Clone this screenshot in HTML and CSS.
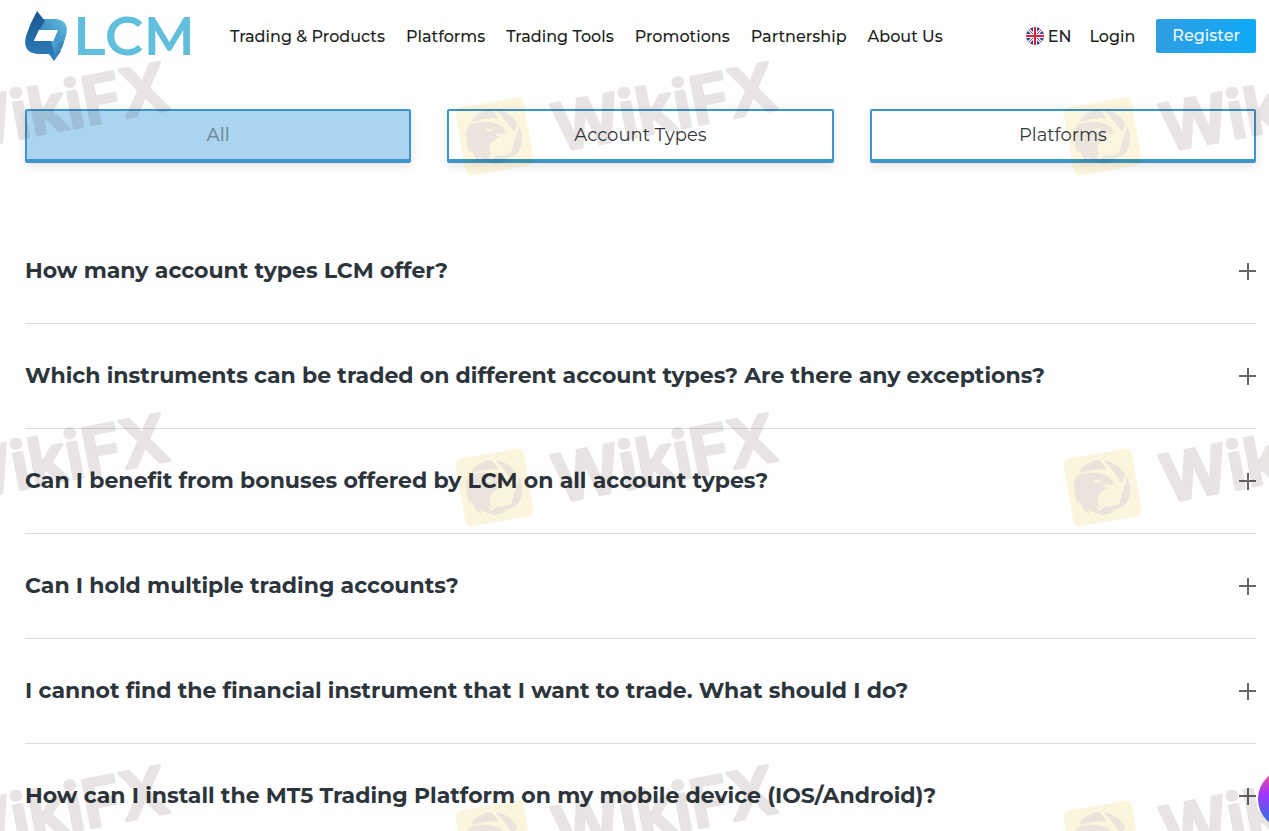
FILE: index.html
```html
<!DOCTYPE html>
<html lang="en">
<head>
<meta charset="utf-8">
<meta name="viewport" content="width=device-width, initial-scale=1">
<title>LCM FAQ</title>
<link rel="stylesheet" href="styles.css">
</head>
<body>
<header class="header">
  <a class="logo" href="#" aria-label="LCM home">
    <svg width="176" height="52" viewBox="0 0 176 52">
      <defs>
        <linearGradient id="mark-light" x1="0" y1="1" x2="1" y2="0"><stop offset="0" stop-color="#1d66a8"/><stop offset="1" stop-color="#62bfe0"/></linearGradient>
        <linearGradient id="mark-dark" x1="0" y1="0" x2="0" y2="1"><stop offset="0" stop-color="#1b5590"/><stop offset="1" stop-color="#2d7fbc"/></linearGradient>
        <linearGradient id="mark-tail" x1="0" y1="0" x2="1" y2="1"><stop offset="0" stop-color="#56b1da"/><stop offset="1" stop-color="#1c5d9e"/></linearGradient>
      </defs>
      <path d="M12 9H31Q45 11 41 26L37 38Q34 42 29 44L24 32H28L33 20H12Z" fill="url(#mark-light)"/>
      <path d="M12 1L20 11L14 20L9 31H28L36 41L29 51L24 44H12Q-3 42 1 26L6 13Z" fill="url(#mark-dark)"/>
      <path d="M26 31L39 32L36 39L29 51V42Z" fill="url(#mark-tail)"/>
      <path d="M14 20H32L27 31H9Z" fill="#fff"/>
      <text class="logo-text" x="48" y="45">LCM</text>
    </svg>
  </a>
  <nav class="nav" aria-label="Main">
    <a href="#">Trading &amp; Products</a>
    <a href="#">Platforms</a>
    <a href="#">Trading Tools</a>
    <a href="#">Promotions</a>
    <a href="#">Partnership</a>
    <a href="#">About Us</a>
  </nav>
  <div class="account">
    <button class="language" type="button">
      <svg width="18" height="18" viewBox="0 0 18 18" aria-hidden="true">
        <clipPath id="flag-clip"><circle cx="9" cy="9" r="9"/></clipPath>
        <g clip-path="url(#flag-clip)">
          <path d="M0 0H18V18H0Z" fill="#35448f"/>
          <path d="M1 1L17 17M17 1L1 17" stroke="#fff" stroke-width="3"/>
          <path d="M1 1L17 17M17 1L1 17" stroke="#d9324a" stroke-width="1"/>
          <path d="M9 0V18M0 9H18" stroke="#fff" stroke-width="4"/>
          <path d="M9 0V18M0 9H18" stroke="#d9203c" stroke-width="2"/>
        </g>
      </svg>
      EN
    </button>
    <a class="login" href="#">Login</a>
    <a class="register" href="#">Register</a>
  </div>
</header>
<main class="main">
  <div class="tabs">
    <button class="tab tab-active" type="button">All</button>
    <button class="tab" type="button">Account Types</button>
    <button class="tab" type="button">Platforms</button>
  </div>
  <section class="faq" aria-label="Frequently asked questions">
    <details class="item"><summary>How many account types LCM offer?<span class="plus"></span></summary></details>
    <details class="item"><summary>Which instruments can be traded on different account types? Are there any exceptions?<span class="plus"></span></summary></details>
    <details class="item"><summary>Can I benefit from bonuses offered by LCM on all account types?<span class="plus"></span></summary></details>
    <details class="item"><summary>Can I hold multiple trading accounts?<span class="plus"></span></summary></details>
    <details class="item"><summary>I cannot find the financial instrument that I want to trade. What should I do?<span class="plus"></span></summary></details>
    <details class="item"><summary>How can I install the MT5 Trading Platform on my mobile device (IOS/Android)?<span class="plus"></span></summary></details>
  </section>
</main>
<svg class="watermark" aria-hidden="true">
  <defs>
    <g id="stamp">
      <rect x="460" y="102" width="69" height="69" rx="6" transform="rotate(-10 494 136)" fill="#fdf6df"/>
      <g transform="translate(432 49) scale(.3333)" fill="#ece5de">
        <path d="M124 207Q145 184 178 180L202 208Q160 207 117 220Z"/>
        <path d="M190 180Q235 188 256 224L247 250L207 198Z"/>
        <path d="M262 232Q279 270 262 306Q253 321 234 324L238 308Z"/>
        <path d="M252 306Q224 340 190 345Q176 344 174 336L194 320Q222 320 252 306Z"/>
        <path d="M112 225Q155 211 187 222Q216 230 222 252L214 255Q197 249 189 258Q196 264 207 264Q184 273 176 286Q167 304 180 322L170 318L178 342Q153 337 142 321L149 342Q125 330 120 304L113 312Q100 285 106 262L100 268Q101 243 112 225Z"/>
        <path d="M162 239L184 239Q179 249 166 247Z" fill="#fdf6df"/>
      </g>
      <text class="stamp-text" transform="translate(558 152) rotate(-11)">WikiFX</text>
    </g>
  </defs>
  <use href="#stamp" x="-608"/><use href="#stamp"/><use href="#stamp" x="608"/>
  <use href="#stamp" x="-608" y="351"/><use href="#stamp" y="351"/><use href="#stamp" x="608" y="351"/>
  <use href="#stamp" x="-608" y="703"/><use href="#stamp" y="703"/><use href="#stamp" x="608" y="703"/>
</svg>
<button class="chat" type="button" aria-label="Open chat"></button>
</body>
</html>
```
FILE: styles.css
```css
* { box-sizing: border-box; }
body {
  margin: 0;
  background: #fefefe;
  color: #1c1e20;
  font-family: Montserrat, Inter, "Open Sans", sans-serif;
  font-size: 16px;
}
a { color: inherit; text-decoration: none; }
button { font: inherit; color: inherit; cursor: pointer; }
.header {
  display: flex;
  align-items: center;
  padding: 10px 13px 10px 25px;
}
.logo { display: block; height: 52px; margin-right: 29px; }
.logo svg { overflow: visible; }
.logo-text {
  font-size: 54px;
  font-weight: 600;
  fill: #60bfdc;
}
.nav { display: flex; gap: 21px; font-weight: 500; white-space: nowrap; }
.account { display: flex; align-items: center; margin-left: auto; font-weight: 500; }
.language {
  display: flex;
  align-items: center;
  gap: 4px;
  padding: 0;
  border: 0;
  background: none;
}
.login { margin: 0 21px 0 18px; }
.register {
  padding: 0 16px;
  border-radius: 2px;
  background: linear-gradient(90deg, #2f9de2, #10aaf8);
  color: #eef8ff;
  line-height: 34px;
}
.main { padding: 37px 13px 0 25px; }
.tabs { display: grid; grid-template-columns: repeat(3, 1fr); gap: 36px; }
.tab {
  height: 54px;
  padding: 0;
  border: 2px solid #3f95c9;
  border-bottom-width: 4px;
  border-radius: 2px;
  background: #fff;
  box-shadow: 0 3px 10px rgba(0, 0, 0, .1);
  color: #34383b;
  font-size: 18px;
}
.tab-active { background: #abd4f1; color: #748b9c; font-weight: 500; }
.faq { margin-top: 56px; }
.item { border-bottom: 1px solid #dedede; }
.item summary {
  display: flex;
  align-items: center;
  justify-content: space-between;
  min-height: 104px;
  color: #2d353c;
  font-size: 22px;
  font-weight: 700;
  line-height: 28px;
  list-style: none;
  cursor: pointer;
}
.plus {
  flex: none;
  width: 17px;
  height: 17px;
  background:
    linear-gradient(#666, #666) center / 17px 2px no-repeat,
    linear-gradient(#666, #666) center / 2px 17px no-repeat;
}
.watermark {
  position: fixed;
  inset: 0;
  width: 100%;
  height: 100%;
  pointer-events: none;
  mix-blend-mode: multiply;
}
.stamp-text {
  font-family: Inter, sans-serif;
  font-size: 66px;
  font-weight: 600;
  fill: #e9e5e4;
  stroke: #e9e5e4;
  stroke-width: 3px;
  stroke-linejoin: round;
}
.chat {
  position: fixed;
  right: -49px;
  bottom: 2px;
  width: 60px;
  height: 60px;
  padding: 0;
  border: 0;
  border-radius: 50%;
  background: linear-gradient(#ff5280 0, #a033ff 42%, #3b6fe0 85%);
}
```
